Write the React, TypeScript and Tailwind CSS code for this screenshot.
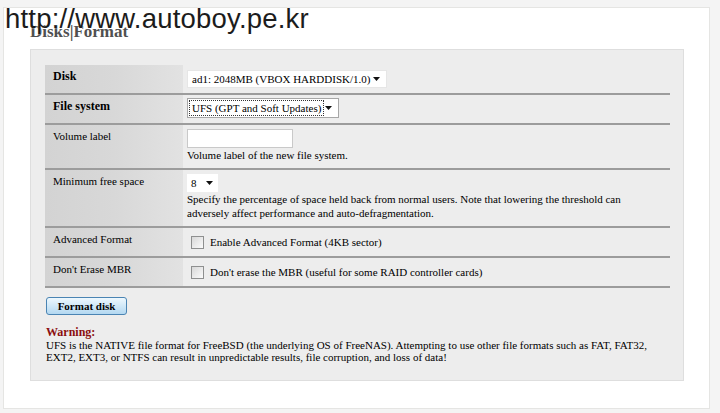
import React from 'react';

const Caret = () => (
  <svg width="7" height="4" viewBox="0 0 7 4" className="shrink-0">
    <path d="M0 0h7L3.5 4z" fill="#111" />
  </svg>
);

const Checkbox = () => (
  <div className="w-[13px] h-[13px] shrink-0 border border-[#8e8f8f] bg-gradient-to-br from-[#d8d8d8] to-[#fbfbfb]" />
);

type Row = {
  label: string;
  bold?: boolean;
  h: string;
  content: React.ReactNode;
};

const rows: Row[] = [
  {
    label: 'Disk',
    bold: true,
    h: 'h-[30px]',
    content: (
      <div className="mt-[5px] w-[200px] h-[18px] bg-white border border-[#e6e6e6] flex items-center justify-between pl-[4px] pr-[6px]">
        <span>ad1: 2048MB (VBOX HARDDISK/1.0)</span>
        <Caret />
      </div>
    ),
  },
  {
    label: 'File system',
    bold: true,
    h: 'h-[30px]',
    content: (
      <div className="mt-[3px] w-[152px] h-[20px] bg-white border border-[#a7a7a7] flex items-center justify-between pl-[1px] pr-[6px]">
        <span className="border border-dotted border-[#333] px-[2px] leading-[14px]">UFS (GPT and Soft Updates)</span>
        <Caret />
      </div>
    ),
  },
  {
    label: 'Volume label',
    h: 'h-[45px]',
    content: (
      <div className="pt-[4px]">
        <div className="w-[106px] h-[19px] bg-white border border-[#c9c9c9]" />
        <p className="leading-[14px]">Volume label of the new file system.</p>
      </div>
    ),
  },
  {
    label: 'Minimum free space',
    h: 'h-[58px]',
    content: (
      <div className="pt-[4px]">
        <div className="w-[31px] h-[18px] bg-white flex items-center justify-between pl-[4px] pr-[5px]">
          <span>8</span>
          <Caret />
        </div>
        <p className="leading-[14px]">
          Specify the percentage of space held back from normal users. Note that lowering the threshold can
          <br />
          adversely affect performance and auto-defragmentation.
        </p>
      </div>
    ),
  },
  {
    label: 'Advanced Format',
    h: 'h-[30px]',
    content: (
      <div className="pt-[7px] pl-[4px] flex items-center gap-[6px]">
        <Checkbox />
        <span className="leading-[14px]">Enable Advanced Format (4KB sector)</span>
      </div>
    ),
  },
  {
    label: "Don't Erase MBR",
    h: 'h-[30px]',
    content: (
      <div className="pt-[7px] pl-[4px] flex items-center gap-[6px]">
        <Checkbox />
        <span className="leading-[14px]">Don't erase the MBR (useful for some RAID controller cards)</span>
      </div>
    ),
  },
];

export default function App() {
  return (
    <div className="relative w-[720px] h-[413px] overflow-hidden bg-[#f4f4f4] font-['Liberation_Serif',serif] text-[11px] text-black">
      <div className="ml-[3px] mt-[7px] w-[707px] h-[402px] bg-white border border-[#e5e5e3]">
        <h1 className="pl-[26px] pt-[14px] h-[41px] text-[17px] leading-[20px] font-bold text-[#505050]">
          Disks|Format
        </h1>
        <div className="ml-[26px] w-[654px] h-[332px] bg-[#ededed] border border-[#dedede] pt-[15px] pl-[14px]">
          <div className="w-[625px]">
            {rows.map((r) => (
              <div key={r.label} className={`flex ${r.h} border-b-2 border-[#9c9c9c]`}>
                <div
                  className={`w-[138px] shrink-0 bg-gradient-to-r from-[#d3d3d3] via-[#d8d8d8] to-[#e2e2e2] pl-[8px] pt-[4px] leading-[14px] ${
                    r.bold ? 'font-bold text-[12px]' : ''
                  }`}
                >
                  {r.label}
                </div>
                <div className="flex-1 pl-[4px]">{r.content}</div>
              </div>
            ))}
          </div>
          <button className="mt-[9px] ml-[1px] w-[81px] h-[18px] rounded-[3px] border border-[#4a84b3] bg-gradient-to-b from-[#eef8fe] to-[#b3d8f1] font-bold text-[11px] leading-[14px]">
            Format disk
          </button>
          <div className="mt-[11px] ml-[1px] leading-[12.5px]">
            <p className="font-bold text-[#8b0f0f] text-[12px]">Warning:</p>
            <p>
              UFS is the NATIVE file format for FreeBSD (the underlying OS of FreeNAS). Attempting to use other file formats such as FAT, FAT32,
              <br />
              EXT2, EXT3, or NTFS can result in unpredictable results, file corruption, and loss of data!
            </p>
          </div>
        </div>
      </div>
      <div className="absolute left-[5px] top-[5px] font-['Liberation_Sans',sans-serif] text-[27.5px] leading-[27px] tracking-[0.2px] text-[#1c1c1c] [text-shadow:0_0_2px_#fff]">
        http://www.autoboy.pe.kr
      </div>
    </div>
  );
}
